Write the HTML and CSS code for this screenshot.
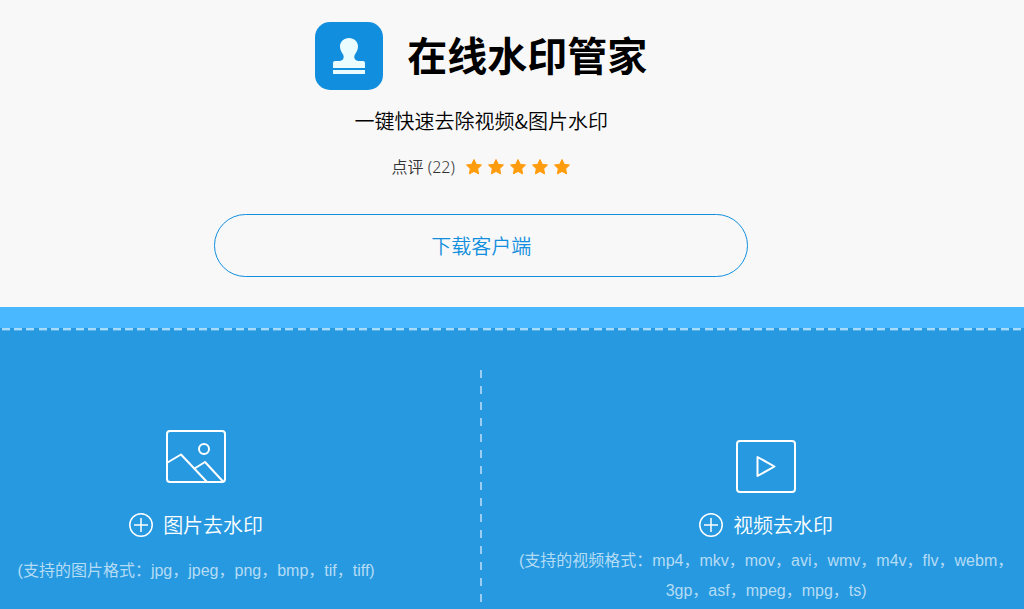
FILE: index.html
```html
<!DOCTYPE html>
<html lang="zh-CN">
<head>
  <meta charset="UTF-8">
  <meta name="viewport" content="width=device-width, initial-scale=1.0">
  <title>在线水印管家</title>
  <link rel="stylesheet" href="styles.css">
</head>
<body>

<svg class="sprite" aria-hidden="true">
  <symbol id="star" viewBox="0 0 18 18">
    <path d="M9 1.500l2.300 4.800 5.200.7-3.800 3.700.9 5.200L9 13.400l-4.600 2.500.9-5.200L1.500 7l5.200-.7z"/>
  </symbol>
  <symbol id="plus" viewBox="0 0 24 24">
    <circle cx="12" cy="12" r="11.200"/>
    <path d="M12 5v14M5 12h14"/>
  </symbol>
</svg>

<header class="hero">
  <div class="brand">
    <svg class="logo" viewBox="0 0 68 68" aria-hidden="true">
      <rect width="68" height="68" rx="15" fill="#118fde"/>
      <path fill="#ebfcff" d="M34 16c5.200 0 9 3.800 9 8.500 0 3.300-1.500 5.500-2.800 7.500-1.200 2-1.200 3.800-.2 5.300.8 1.100 2 1.700 3.500 1.700H48c1.300 0 2 .8 2 2v5H18v-5c0-1.200.8-2 2-2h4.500c1.500 0 2.700-.6 3.500-1.700 1-1.500 1-3.300-.2-5.300-1.300-2-2.800-4.200-2.800-7.500 0-4.700 3.800-8.500 9-8.500zM18 48h32v4H18z"/>
    </svg>
    <h1>在线水印管家</h1>
  </div>
  <p class="slogan">一键快速去除视频&amp;图片水印</p>
  <div class="rating">
    <span>点评 (22)</span>
    <div class="stars" role="img" aria-label="5">
      <svg><use href="#star"/></svg>
      <svg><use href="#star"/></svg>
      <svg><use href="#star"/></svg>
      <svg><use href="#star"/></svg>
      <svg><use href="#star"/></svg>
    </div>
  </div>
  <a class="download" href="#">下载客户端</a>
</header>

<main class="tools">
  <!-- Images -->
  <section class="tool tool-image">
    <svg class="tool-icon" viewBox="0 0 60 53" aria-hidden="true">
      <rect x="1" y="1" width="58" height="51" rx="3"/>
      <circle cx="38" cy="19" r="5"/>
      <path d="M1.500 32.500L15 24.500 41 52M28.500 38.500L39 32l18.500 20"/>
    </svg>
    <button class="upload" type="button">
      <svg class="plus" aria-hidden="true"><use href="#plus"/></svg>
      图片去水印
    </button>
    <p class="formats">(支持的图片格式：jpg，jpeg，png，bmp，tif，tiff)</p>
  </section>

  <!-- Videos -->
  <section class="tool tool-video">
    <svg class="tool-icon" viewBox="0 0 60 53" aria-hidden="true">
      <rect x="1" y="1" width="58" height="51" rx="3"/>
      <path d="M21.500 17v19L38.500 26.500z"/>
    </svg>
    <button class="upload" type="button">
      <svg class="plus" aria-hidden="true"><use href="#plus"/></svg>
      视频去水印
    </button>
    <p class="formats">(支持的视频格式：mp4，mkv，mov，avi，wmv，m4v，flv，webm，3gp，asf，mpeg，mpg，ts)</p>
  </section>
</main>

</body>
</html>
```
FILE: styles.css
```css
* {
  box-sizing: border-box;
}

body {
  margin: 0;
  min-height: 100vh;
  display: flex;
  flex-direction: column;
  background: #f8f8f8;
  color: #000;
  font-family: "Noto Sans CJK SC", sans-serif;
  font-weight: 350;
}

h1, p {
  margin: 0;
}

.sprite {
  display: none;
}

.hero {
  width: 94%;
  padding: 22px 0 30px;
  display: flex;
  flex-direction: column;
  align-items: center;
}

.brand {
  display: flex;
  gap: 24px;
}

.logo {
  width: 68px;
  height: 68px;
}

h1 {
  font-size: 40px;
  line-height: 64px;
  font-weight: 700;
}

.slogan {
  margin-top: 16px;
  font-size: 20px;
  line-height: 30px;
}

.rating {
  margin-top: 20px;
  display: flex;
  align-items: center;
  gap: 10px;
  color: #333;
  font-family: "Noto Sans", "Noto Sans CJK SC", sans-serif;
  font-size: 16px;
  line-height: 22px;
}

.stars {
  display: flex;
  gap: 4px;
}

.stars svg {
  width: 18px;
  height: 18px;
  fill: #ff9c0d;
  stroke: #ff9c0d;
  stroke-width: 1;
  stroke-linejoin: round;
}

.download {
  width: 534px;
  max-width: 90%;
  margin-top: 36px;
  border: 1px solid #118fde;
  border-radius: 32px;
  color: #118fde;
  font-size: 20px;
  line-height: 61px;
  text-align: center;
  text-decoration: none;
}

.tools {
  flex: 1;
  display: grid;
  grid-template-columns: 47% 53%;
  border-top: 21px solid #4ab8ff;
  /* stitched line along the top, with a soft lower edge */
  background:
    linear-gradient(to right, transparent 2px, #a9dcfb 2px 10px, transparent 10px 14px, #a9dcfb 14px 22px, transparent 22px 26px, #a9dcfb 26px 34px, transparent 34px) 0 0 / 37px 2px repeat-x,
    linear-gradient(to right, transparent 2px, #58b2ea 2px 10px, transparent 10px 14px, #58b2ea 14px 22px, transparent 22px 26px, #58b2ea 26px 34px, transparent 34px) 0 0 / 37px 3px repeat-x,
    #2799e0;
  color: #fff;
}

.tool {
  padding-bottom: 4px;
  display: flex;
  flex-direction: column;
  align-items: center;
}

.tool-image {
  padding-top: 102px;
  padding-right: 89px;
}

.tool-video {
  position: relative;
  padding-top: 112px;
  padding-left: 27px;
}

/* dashed divider between the two tools */
.tool-video::before {
  content: "";
  position: absolute;
  top: 42px;
  bottom: 0;
  left: -1px;
  width: 2px;
  background: repeating-linear-gradient(#9acdf0 0 8px, transparent 8px 16px);
}

.tool-icon {
  width: 60px;
  height: 53px;
  fill: none;
  stroke: #fff;
  stroke-width: 2;
  stroke-linejoin: round;
}

.upload {
  margin-top: 27px;
  padding: 0;
  display: flex;
  align-items: center;
  gap: 10px;
  border: 0;
  background: none;
  color: inherit;
  font: inherit;
  font-size: 20px;
  line-height: 30px;
  cursor: pointer;
}

.tool-video .upload {
  margin-top: 17px;
}

.plus {
  width: 24px;
  height: 24px;
  fill: none;
  stroke: #fff;
  stroke-width: 1.5;
}

.formats {
  margin-top: 16px;
  color: #b5dcf5;
  font-family: "Liberation Sans", "Noto Sans CJK SC", sans-serif;
  font-size: 16px;
  font-weight: 400;
  line-height: 30px;
  text-align: center;
}

.tool-video .formats {
  margin-top: 6px;
}
```
